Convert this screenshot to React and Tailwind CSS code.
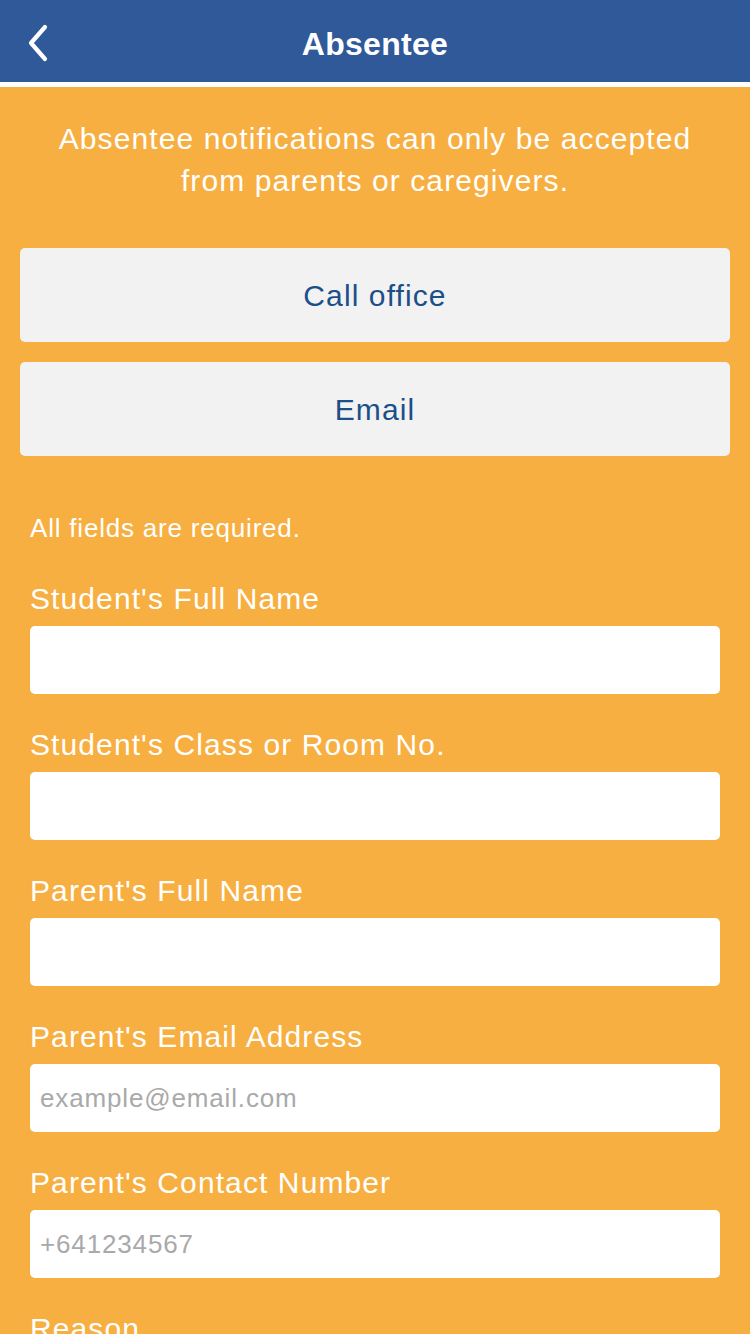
const fields = [
  { label: "Student's Full Name", placeholder: "" },
  { label: "Student's Class or Room No.", placeholder: "" },
  { label: "Parent's Full Name", placeholder: "" },
  { label: "Parent's Email Address", placeholder: "example@email.com" },
  { label: "Parent's Contact Number", placeholder: "+641234567" },
  { label: "Reason", placeholder: "" },
];

function Header() {
  return (
    <div className="bg-[#30599a] h-[82px] flex items-center justify-center relative border-b-[5px] border-white box-content">
      <button className="absolute left-[22px] top-[22px] w-[32px] h-[42px] flex items-center justify-center">
        <svg width="24" height="38" viewBox="0 0 24 38" fill="none">
          <path d="M19 3 L5 19 L19 35" stroke="white" strokeWidth="4.2" strokeLinecap="round" strokeLinejoin="round" />
        </svg>
      </button>
      <h1 className="text-white text-[32px] font-semibold tracking-[0.3px] mt-[6px]">Absentee</h1>
    </div>
  );
}

export default function App() {
  return (
    <div className="w-[750px] h-[1334px] overflow-hidden bg-[#f7af41] font-['Liberation_Sans',Arial,sans-serif]">
      <Header />

      <p className="text-white text-[30px] tracking-[1.1px] leading-[42px] text-center mt-[31px] px-[10px]">
        Absentee notifications can only be accepted
        <br />
        from parents or caregivers.
      </p>

      <div className="mt-[46px] px-[20px] flex flex-col gap-[20px]">
        <button className="h-[94px] w-full rounded-[5px] bg-[#f2f2f2] text-[#1b4f8a] text-[30px] tracking-[1.1px]">Call office</button>
        <button className="h-[94px] w-full rounded-[5px] bg-[#f2f2f2] text-[#1b4f8a] text-[30px] tracking-[1.1px]">Email</button>
      </div>

      <div className="px-[30px]">
        <p className="text-white text-[26px] tracking-[0.8px] leading-[30px] mt-[57px]">All fields are required.</p>

        <div className="mt-[5px] flex flex-col">
          {fields.map((f) => (
            <div key={f.label}>
              <label className="block text-white text-[30px] tracking-[1.1px] leading-[36px] mt-[33px] mb-[9px]">{f.label}</label>
              <input
                type="text"
                placeholder={f.placeholder}
                className="w-full h-[68px] bg-white rounded-[5px] px-[10px] text-[26px] tracking-[0.85px] outline-none placeholder:text-[#a9a9a9]"
              />
            </div>
          ))}
        </div>
      </div>
    </div>
  );
}
